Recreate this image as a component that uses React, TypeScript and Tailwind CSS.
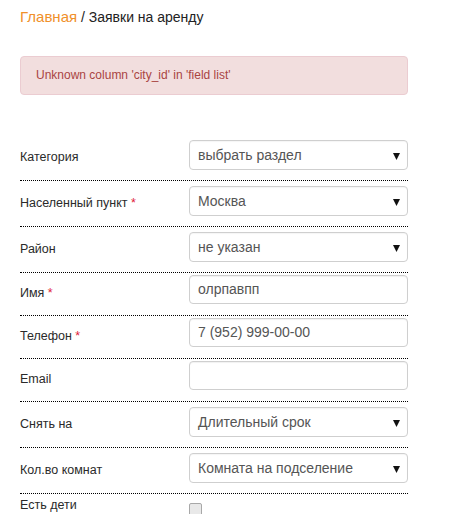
import React from "react";

const font = { fontFamily: '"Liberation Sans", Arial, sans-serif' };

function Arrow() {
  return (
    <svg width="7" height="8" viewBox="0 0 7 8" className="absolute right-[7px] top-[11px]">
      <path d="M0 1 H7 L3.5 8 Z" fill="#111" />
    </svg>
  );
}

function SelectRow({ label, value, req }: { label: string; value: string; req?: boolean }) {
  return (
    <div className="flex pt-[5px] pb-[10px] border-b border-dotted border-black">
      <div className="w-[169px] pt-[8px] text-[12.5px] leading-[18px] text-[#2a2a2a]">
        {label}
        {req && <span className="text-[#e0203a]"> *</span>}
      </div>
      <div className="relative w-[219px] h-[30px] rounded-[4px] border border-[#cfcfcf] bg-white pl-[8px] text-[14px] leading-[28px] text-[#555] shadow-[inset_0_1px_1px_rgba(0,0,0,0.04)]">
        {value}
        <Arrow />
      </div>
    </div>
  );
}

function InputRow({ label, value, req }: { label: string; value: string; req?: boolean }) {
  return (
    <div className="flex pt-[2px] pb-[11px] border-b border-dotted border-black">
      <div className="w-[169px] pt-[9px] text-[12.5px] leading-[18px] text-[#2a2a2a]">
        {label}
        {req && <span className="text-[#e0203a]"> *</span>}
      </div>
      <div className="w-[219px] h-[29px] rounded-[4px] border border-[#cfcfcf] bg-white pl-[8px] text-[14px] leading-[27px] text-[#555] shadow-[inset_0_1px_1px_rgba(0,0,0,0.06)]">
        {value}
      </div>
    </div>
  );
}

export default function App() {
  return (
    <div className="w-[457px] h-[514px] overflow-hidden bg-white" style={font}>
      <div className="pl-[20px] w-[408px]">
        <div className="pt-[8px] text-[14px] leading-[18px] text-[#222]">
          <span className="text-[15px] text-[#f0902a]">Главная</span> / Заявки на аренду
        </div>
        <div className="mt-[30px] h-[39px] rounded-[4px] border border-[#ebccd1] bg-[#f2dede] pl-[15px] text-[12px] leading-[37px] text-[#a94442]">
          Unknown column 'city_id' in 'field list'
        </div>
        <div className="mt-[40px]">
          <SelectRow label="Категория" value="выбрать раздел" />
          <SelectRow label="Населенный пункт" value="Москва" req />
          <SelectRow label="Район" value="не указан" />
          <InputRow label="Имя" value="олрпавпп" req />
          <InputRow label="Телефон" value="7 (952) 999-00-00" req />
          <InputRow label="Email" value="" />
          <SelectRow label="Снять на" value="Длительный срок" />
          <SelectRow label="Кол.во комнат" value="Комната на подселение" />
          <div className="flex pt-[2px]">
            <div className="w-[169px] text-[12.5px] leading-[18px] text-[#2a2a2a]">Есть дети</div>
            <div className="mt-[7px] w-[13px] h-[13px] rounded-[2px] border border-[#a8a8a8] bg-[#e9e9e9]" />
          </div>
        </div>
      </div>
    </div>
  );
}
